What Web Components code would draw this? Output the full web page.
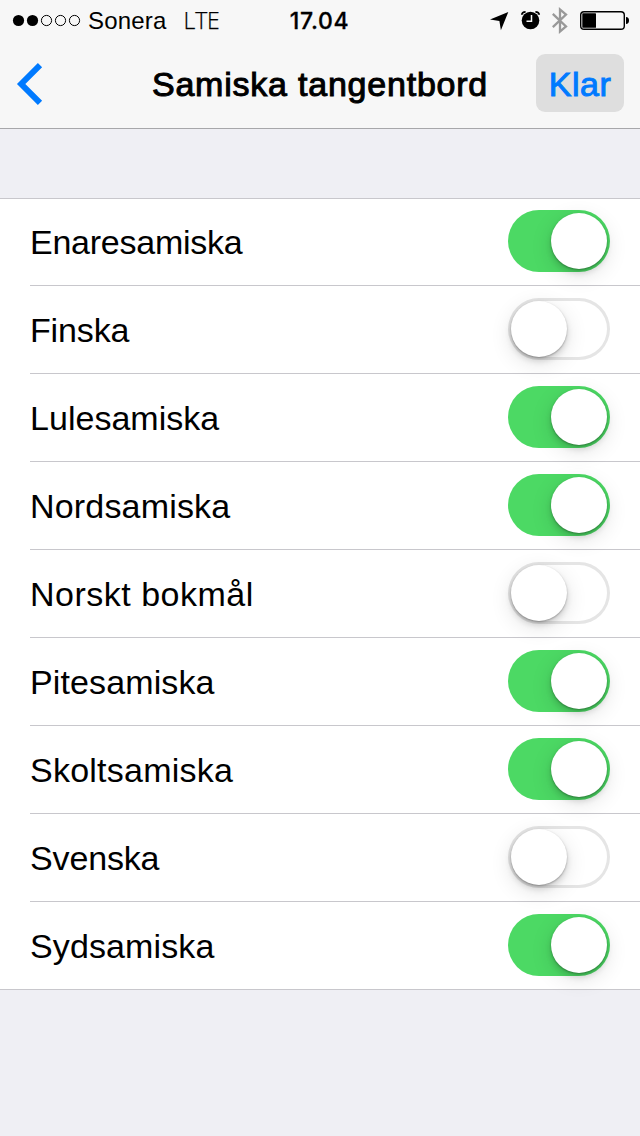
<!DOCTYPE html>
<html lang="sv">
<head>
<meta charset="utf-8">
<title>Samiska tangentbord</title>
<style>
html,body{margin:0;height:100%;background:#efeff4}
body{font-family:"Liberation Sans",Arial,sans-serif;color:#000;overflow:hidden}
</style>
</head>
<body>
<settings-screen></settings-screen>
<script>
const define = (name, html, setup) => customElements.define(name, class extends HTMLElement {
  constructor() {
    super();
    const t = document.createElement('template');
    t.innerHTML = html;
    this.attachShadow({mode: 'open'}).append(t.content.cloneNode(true));
  }
  connectedCallback() { if (setup) setup(this); }
});

define('status-bar', `
<style>
:host{display:grid;grid-template-columns:1fr auto 1fr;align-items:start;height:40px;box-sizing:border-box;padding:0 11px 0 12px;font-size:24px}
.left{display:flex;align-items:flex-start;height:40px}
.dots{display:block;margin-right:7px}
.carrier{line-height:41px;letter-spacing:.2px}
.net{line-height:40px;font-family:"Open Sans",sans-serif;font-weight:300;font-size:23px;margin-left:17px;letter-spacing:-.2px;-webkit-text-stroke:.25px #000}
.time{line-height:42px;font-family:Inter,sans-serif;font-weight:500;font-size:23px;letter-spacing:.7px;-webkit-text-stroke:.3px #000;padding-right:2px}
.right{display:flex;justify-content:flex-end;height:40px}
svg{display:block}
</style>
<div class="left">
<svg class="dots" width="69" height="40" viewBox="0 0 69 40"><circle cx="6.5" cy="20.5" r="5.6"/><circle cx="20.5" cy="20.5" r="5.6"/><g fill="none" stroke="#000" stroke-width="1"><circle cx="34.5" cy="20.5" r="5.1"/><circle cx="48.5" cy="20.5" r="5.1"/><circle cx="62.5" cy="20.5" r="5.1"/></g></svg>
<span class="carrier">Sonera</span><span class="net">LTE</span></div>
<div class="time">17.04</div>
<div class="right">
<svg width="140" height="40" viewBox="489 0 140 40">
<path d="M508.3 12L490 19.4L499.4 21L500.9 30.3Z"/>
<circle cx="530.5" cy="20.5" r="8.8"/>
<path d="M521.8 14.8Q522 11.8 525.6 11.8M539.2 14.8Q539 11.8 535.4 11.8" fill="none" stroke="#000" stroke-width="1.8"/>
<path d="M531.5 15V21.3H526.5" fill="none" stroke="#f7f7f7" stroke-width="1.5"/>
<path d="M552.8 13.8L566 26.4L560 31.6V9.4L566 14.6L552.8 27.2" fill="none" stroke="#999" stroke-width="2.3"/>
<rect x="580.7" y="11.7" width="43.6" height="17.6" rx="3.4" fill="none" stroke="#000" stroke-width="1.4"/>
<rect x="582.3" y="13.2" width="13.7" height="14.6" rx=".6"/>
<path d="M626 17Q629 17.4 629 20.5Q629 23.6 626 24Z"/>
</svg></div>`);

define('nav-bar', `
<style>
:host{display:grid;grid-template-columns:136px 1fr 136px;align-items:center;height:88px;font-size:34px}
.title{text-align:center;letter-spacing:.78px;-webkit-text-stroke:1px #000;white-space:nowrap}
.done{justify-self:end;margin:-2px 16px 0 0;width:88px;height:58px;box-sizing:border-box;border:0;border-radius:9px;padding:3px 0 0;background:#dedede;color:#007aff;font:34px "Liberation Sans",Arial,sans-serif;letter-spacing:.5px;-webkit-text-stroke:1px #007aff;text-align:center}
.back{display:block;border:0;padding:0;background:none;width:60px;height:88px}
svg{display:block}
</style>
<button class="back" aria-label="Tillbaka"><svg width="60" height="88" viewBox="0 40 60 88"><path d="M40 65.2L21.2 84L40 102.8" fill="none" stroke="#007aff" stroke-width="6"/></svg></button>
<div class="title"><slot></slot></div>
<button class="done"><slot name="action"></slot></button>`);

define('toggle-switch', `
<style>
:host{display:block;box-sizing:border-box;width:102px;height:62px;padding:3px;border-radius:31px;background:#fff;box-shadow:inset 0 0 0 3px #e5e5e5}
:host([on]){background:#4cd964;box-shadow:none;padding-left:43px}
.knob{width:56px;height:56px;border-radius:50%;background:#fff;box-shadow:0 1px 2px rgba(0,0,0,.28),0 4px 6px rgba(0,0,0,.14),0 6px 22px rgba(0,0,0,.12)}
</style><div class="knob"></div>`, el => {
  el.setAttribute('role', 'switch');
  el.setAttribute('aria-checked', el.hasAttribute('on'));
});

define('setting-row', `
<style>
:host{display:flex;height:88px;padding-left:30px;background:#fff}
.body{flex:1;display:flex;justify-content:space-between;box-sizing:border-box;height:88px;padding:12px 30px 0 0;border-bottom:1px solid #c8c7cc}
:host(:last-child) .body{border-color:transparent}
.label{font-size:34px;line-height:64px;letter-spacing:var(--tracking,0)}
</style>
<div class="body"><span class="label"><slot></slot></span><slot name="control"></slot></div>`);

define('setting-list', `
<style>
:host{display:block;background:#fff;box-shadow:inset 0 1px #c8c7cc,inset 0 -1px #c8c7cc}
::slotted(*){background:transparent!important}
</style><slot></slot>`);

define('settings-screen', `
<style>
:host{display:block;width:640px;height:1136px;background:#efeff4}
header{height:129px;box-sizing:border-box;background:#f7f7f7;border-bottom:1px solid #a7a7aa;margin-bottom:69px}
</style>
<header><status-bar></status-bar><nav-bar>Samiska tangentbord<span slot="action">Klar</span></nav-bar></header>
<setting-list></setting-list>`, el => {
  const list = el.shadowRoot.querySelector('setting-list');
  if (list.children.length) return;
  // label, state, letter-spacing in px
  const items = [['Enaresamiska',1,-.24],['Finska',0,-.15],['Lulesamiska',1,.03],['Nordsamiska',1,.18],['Norskt bokmål',0,.5],['Pitesamiska',1,.12],['Skoltsamiska',1,.24],['Svenska',0,-.15],['Sydsamiska',1,.12]];
  for (const [label, on, tracking] of items) {
    const row = document.createElement('setting-row');
    const toggle = document.createElement('toggle-switch');
    row.style.setProperty('--tracking', tracking + 'px');
    toggle.slot = 'control';
    toggle.toggleAttribute('on', !!on);
    row.append(label, toggle);
    list.append(row);
  }
});
</script>
</body>
</html>
